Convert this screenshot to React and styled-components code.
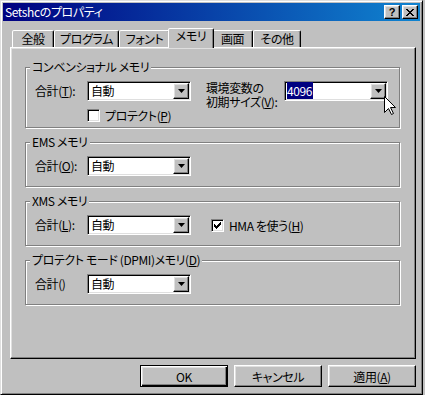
import React from 'react'
import styled, { createGlobalStyle, css } from 'styled-components'

const GlobalStyle = createGlobalStyle`
  html, body { margin: 0; padding: 0; background: #c0c0c0; }
  body {
    font-family: "Noto Sans CJK JP", "Liberation Sans", sans-serif;
    font-size: 12px;
    font-feature-settings: "palt";
    letter-spacing: -0.4px;
    color: #000;
  }
`

const raised = css`
  background: #c0c0c0;
  border: 1px solid;
  border-color: #fff #000 #000 #fff;
  box-shadow: inset -1px -1px #808080, inset 1px 1px #dfdfdf;
`

const sunken = css`
  border: 1px solid;
  border-color: #808080 #fff #fff #808080;
  box-shadow: inset 1px 1px #000, inset -1px -1px #dfdfdf;
`

const Window = styled.div`
  position: relative;
  box-sizing: border-box;
  width: 423px;
  height: 395px;
  background: #c0c0c0;
  border: 1px solid;
  border-color: #dfdfdf #000 #000 #dfdfdf;
  box-shadow: inset 1px 1px #fff, inset -1px -1px #808080;
  padding: 2px;
  display: flex;
  flex-direction: column;
`

const TitleBar = styled.div`
  height: 18px;
  flex: none;
  display: flex;
  align-items: center;
  padding: 0 2px 0 2px;
  background: linear-gradient(90deg, #000080, #1084d0);
`

const TitleText = styled.span`
  color: #fff;
  line-height: 14px;
`

const TitleButtons = styled.div`
  margin-left: auto;
  display: flex;
  gap: 2px;
`

const TitleButton = styled.div`
  box-sizing: border-box;
  width: 16px;
  height: 14px;
  ${raised}
  display: flex;
  align-items: center;
  justify-content: center;
  font-family: "Liberation Sans", sans-serif;
  font-weight: 700;
  font-size: 11px;
  line-height: 12px;
  letter-spacing: 0;
`

const Body = styled.div`
  flex: 1;
  display: flex;
  flex-direction: column;
  padding: 7px 4px 5px 7px;
`

const TabRow = styled.div`
  height: 19px;
  flex: none;
  display: flex;
  align-items: flex-end;
  padding-left: 2px;
`

const Tab = styled.div`
  box-sizing: border-box;
  flex: none;
  width: ${p => (p.$active ? p.$w + 4 : p.$w)}px;
  height: ${p => (p.$active ? 20 : 17)}px;
  margin: 0 ${p => (p.$active ? -2 : 0)}px ${p => (p.$active ? -1 : 0)}px;
  position: ${p => (p.$active ? 'relative' : 'static')};
  z-index: ${p => (p.$active ? 2 : 'auto')};
  background: #c0c0c0;
  border: 1px solid;
  border-bottom: none;
  border-color: #fff #000 transparent #fff;
  border-radius: 2px 2px 0 0;
  box-shadow: inset -1px 0 #808080;
  display: flex;
  justify-content: center;
  padding-top: ${p => (p.$active ? 0 : 1)}px;
  line-height: 14px;
`

const Panel = styled.div`
  flex: 1;
  ${raised}
  padding: 19px 15px 0 14px;
  display: flex;
  flex-direction: column;
  gap: 14px;
`

const Group = styled.div`
  border: 1px solid #808080;
  box-shadow: inset 1px 1px #fff, 1px 1px #fff;
  padding: 0 8px ${p => p.$pb ?? 10}px 9px;
  display: flex;
  flex-direction: column;
`

const GroupTitle = styled.div`
  align-self: flex-start;
  margin: -8px 0 0 -5px;
  padding: 0 2px;
  line-height: 14px;
  background: #c0c0c0;
`

const Row = styled.div`
  display: flex;
  align-items: ${p => p.$align || 'center'};
  margin-top: ${p => p.$mt ?? 7}px;
  padding-left: ${p => p.$indent || 0}px;
`

const Label = styled.div`
  width: ${p => p.$w || 52}px;
  margin-left: ${p => p.$ml || 0}px;
  line-height: ${p => (p.$multi ? 14 : 20)}px;
  white-space: pre;
`

const Combo = styled.div`
  box-sizing: border-box;
  width: 104px;
  height: 20px;
  background: #fff;
  ${sunken}
  padding: 1px;
  display: flex;
  align-items: center;
`

const ComboValue = styled.div`
  flex: 1;
  padding-left: 2px;
  line-height: 14px;
`

const Selected = styled.span`
  background: #000080;
  color: #fff;
  padding: 0 1px 0 0;
  margin-left: -1px;
`

const DropButton = styled.div`
  box-sizing: border-box;
  width: 16px;
  height: 16px;
  ${raised}
  display: flex;
  align-items: center;
  justify-content: center;
`

const Check = styled.label`
  display: flex;
  align-items: center;
  gap: 5px;
  margin-left: ${p => p.$ml || 0}px;
  line-height: 13px;
`

const CheckBox = styled.span`
  box-sizing: border-box;
  width: 13px;
  height: 13px;
  background: #fff;
  ${sunken}
  display: flex;
  align-items: center;
  justify-content: center;
`

const ButtonRow = styled.div`
  display: flex;
  justify-content: flex-end;
  gap: 6px;
  margin-top: 6px;
`

const PushButton = styled.div`
  box-sizing: border-box;
  width: 88px;
  height: 22px;
  display: flex;
  align-items: center;
  justify-content: center;
  background: #c0c0c0;
  ${p =>
    p.$default
      ? css`
          border: 1px solid #000;
          box-shadow: inset 1px 1px #fff, inset -1px -1px #000, inset -2px -2px #808080,
            inset 2px 2px #dfdfdf;
        `
      : raised}
`

const Cursor = styled.svg`
  position: absolute;
  left: 383px;
  top: 95px;
`

const Arrow = () => (
  <svg width="7" height="4" viewBox="0 0 7 4">
    <path d="M0 0h7L3.5 4z" fill="#000" />
  </svg>
)

const Dropdown = ({ children }) => (
  <Combo>
    <ComboValue>{children}</ComboValue>
    <DropButton>
      <Arrow />
    </DropButton>
  </Combo>
)

const Checkbox = ({ checked, children, ml }) => (
  <Check $ml={ml}>
    <CheckBox>
      {checked && (
        <svg width="7" height="7" viewBox="0 0 7 7" shapeRendering="crispEdges">
          <path
            d="M6 0h1v3h-1v1h-1v1h-1v1h-1v1h-1v-1h-1v-1h-1v-3h1v1h1v1h1v-1h1v-1h1z"
            fill="#000"
          />
        </svg>
      )}
    </CheckBox>
    <span>{children}</span>
  </Check>
)

const tabs = [
  { t: '全般', w: 42 },
  { t: 'プログラム', w: 65 },
  { t: 'フォント', w: 51 },
  { t: 'メモリ', w: 42, active: true },
  { t: '画面', w: 41 },
  { t: 'その他', w: 48 },
]

export default function App() {
  return (
    <>
      <GlobalStyle />
      <Window>
        <TitleBar>
          <TitleText>Setshcのプロパティ</TitleText>
          <TitleButtons>
            <TitleButton>?</TitleButton>
            <TitleButton>
              <svg width="8" height="7" viewBox="0 0 8 7" shapeRendering="crispEdges">
                <path
                  d="M0 0h2v1h-2zM6 0h2v1h-2zM1 1h2v1h-2zM5 1h2v1h-2zM2 2h4v1h-4zM3 3h2v1h-2zM2 4h4v1h-4zM1 5h2v1h-2zM5 5h2v1h-2zM0 6h2v1h-2zM6 6h2v1h-2z"
                  fill="#000"
                />
              </svg>
            </TitleButton>
          </TitleButtons>
        </TitleBar>

        <Body>
          <TabRow>
            {tabs.map(tab => (
              <Tab key={tab.t} $w={tab.w} $active={tab.active}>
                {tab.t}
              </Tab>
            ))}
          </TabRow>

          <Panel>
            <Group $pb={5}>
              <GroupTitle>コンベンショナル メモリ</GroupTitle>
              <Row $align="flex-start">
                <Label>
                  合計(<u>T</u>):
                </Label>
                <Dropdown>自動</Dropdown>
                <Label $w={78} $ml={15} $multi>
                  環境変数の{'\n'}初期サイズ(<u>V</u>):
                </Label>
                <Dropdown>
                  <Selected>4096</Selected>
                </Dropdown>
              </Row>
              <Row $mt={0} $indent={52}>
                <Checkbox>
                  プロテクト(<u>P</u>)
                </Checkbox>
              </Row>
            </Group>

            <Group>
              <GroupTitle>EMS メモリ</GroupTitle>
              <Row>
                <Label>
                  合計(<u>O</u>):
                </Label>
                <Dropdown>自動</Dropdown>
              </Row>
            </Group>

            <Group>
              <GroupTitle>XMS メモリ</GroupTitle>
              <Row>
                <Label>
                  合計(<u>L</u>):
                </Label>
                <Dropdown>自動</Dropdown>
                <Checkbox checked ml={20}>
                  HMA を使う(<u>H</u>)
                </Checkbox>
              </Row>
            </Group>

            <Group>
              <GroupTitle>
                プロテクト モード (DPMI)メモリ(<u>D</u>)
              </GroupTitle>
              <Row>
                <Label>合計()</Label>
                <Dropdown>自動</Dropdown>
              </Row>
            </Group>
          </Panel>

          <ButtonRow>
            <PushButton $default>OK</PushButton>
            <PushButton>キャンセル</PushButton>
            <PushButton>
              適用(<u>A</u>)
            </PushButton>
          </ButtonRow>
        </Body>

        <Cursor width="12" height="20" viewBox="0 0 12 20">
          <path
            d="M0.5 0.5V16.5L4.5 12.5L7.5 18.5L9.5 17.5L6.5 11.5H11.5Z"
            fill="#fff"
            stroke="#000"
            strokeWidth="1"
          />
        </Cursor>
      </Window>
    </>
  )
}
